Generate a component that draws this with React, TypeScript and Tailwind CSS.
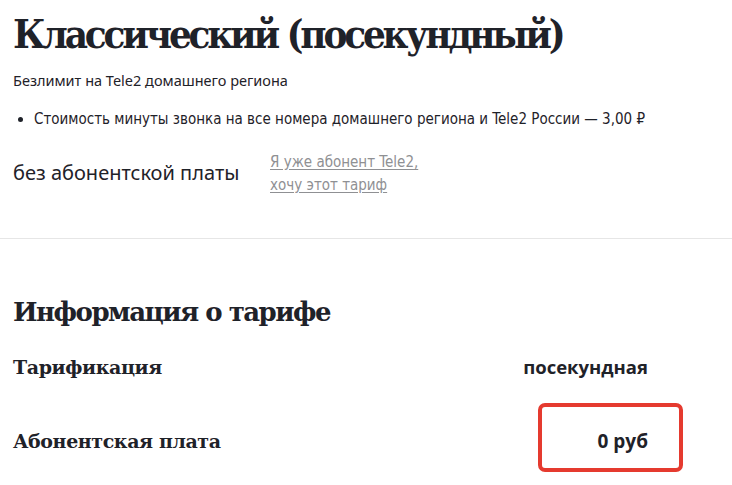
const slab = { fontFamily: '"DejaVu Serif", serif' };

export default function App() {
  return (
    <div className="min-h-[485px] w-[732px] bg-white text-[#1f2229]">
      <section className="px-[13px] pt-[10px]">
        <h1 className="text-[40px] font-bold leading-[48px] tracking-[-3.2px] font-stretch-condensed font-['DejaVu_Serif',serif]">
          Классический (посекундный)
        </h1>
        <p className="mt-[12px] text-[14.5px] leading-[20px] font-['Noto_Sans',sans-serif]">
          Безлимит на Tele2 домашнего региона
        </p>
        <ul className="mt-[18px] font-['DejaVu_Sans_Condensed',sans-serif] font-stretch-condensed text-[15px] leading-[22px]">
          <li className="flex items-center gap-[11px]">
            <span className="ml-[5px] h-[5px] w-[5px] rounded-full bg-[#1f2229]" />
            <span>Стоимость минуты звонка на все номера домашнего региона и Tele2 России — 3,00 ₽</span>
          </li>
        </ul>
        <div className="mt-[21px] flex items-start">
          <p className="w-[257px] pt-[10px] text-[20px] leading-[24px] font-['Noto_Sans',sans-serif]">без абонентской платы</p>
          <a
            href="#"
            className="text-[15px] leading-[23px] text-[#8f9093] underline underline-offset-2 font-stretch-condensed font-['DejaVu_Sans_Condensed',sans-serif]"
          >
            Я уже абонент Tele2,
            <br />
            хочу этот тариф
          </a>
        </div>
      </section>

      <div className="mt-[41px] h-px w-full bg-[#e6e6e6]" />

      <section className="px-[13px] pt-[57px]">
        <h2 className="text-[26px] font-bold leading-[32px] tracking-[-1.5px] font-['DejaVu_Serif',serif]">
          Информация о тарифе
        </h2>
        <div className="mt-[25px] flex items-center justify-between pr-[71px]">
          <span className="text-[19px] font-bold leading-[28px] tracking-[-0.4px]" style={slab}>Тарификация</span>
          <span className="text-[18.5px] font-bold leading-[28px] font-['Open_Sans',sans-serif]">посекундная</span>
        </div>
        <div className="mt-[46px] flex items-center justify-between pr-[71px]">
          <span className="text-[19px] font-bold leading-[28px] tracking-[-0.4px]" style={slab}>Абонентская плата</span>
          <span className="relative text-[19px] font-bold leading-[28px] font-['Open_Sans',sans-serif]">
            0 руб
            <span className="absolute -top-[24px] -bottom-[17px] -left-[60px] -right-[35px] rounded-[7px] border-[4px] border-[#e53a2f]" />
          </span>
        </div>
      </section>
    </div>
  );
}
